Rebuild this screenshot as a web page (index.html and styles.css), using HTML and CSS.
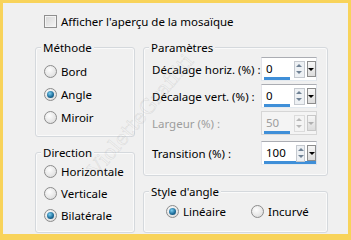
FILE: index.html
```html
<!DOCTYPE html>
<html lang="fr">
<head>
    <meta charset="UTF-8">
    <title>Mosaïque</title>
    <link rel="stylesheet" href="styles.css">
</head>
<body>
<div class="panel">
    <label class="check-row"><span class="check"></span>Afficher l'aperçu de la mosaïque</label>
    <div class="columns">
        <div class="col col-left">
            <div class="group methode">
                <div class="group-title">Méthode</div>
                <div class="radio-row first"><span class="radio"></span>Bord</div>
                <div class="radio-row"><span class="radio on"></span>Angle</div>
                <div class="radio-row"><span class="radio"></span>Miroir</div>
            </div>
            <div class="group direction">
                <div class="group-title">Direction</div>
                <div class="radio-row"><span class="radio"></span>Horizontale</div>
                <div class="radio-row"><span class="radio"></span>Verticale</div>
                <div class="radio-row"><span class="radio on"></span>Bilatérale</div>
            </div>
        </div>
        <div class="col col-right">
            <div class="group params">
                <div class="group-title">Paramètres</div>
                <div class="spin-row first">
                    <span class="spin-label">Décalage horiz. (%) :</span>
                    <div class="spin"><div class="value">0<span class="bar" style="width:26px"></span></div><span class="updown"><i class="up"></i><i class="down"></i></span><span class="drop"></span></div>
                </div>
                <div class="spin-row">
                    <span class="spin-label">Décalage vert. (%) :</span>
                    <div class="spin"><div class="value">0<span class="bar" style="width:26px"></span></div><span class="updown"><i class="up"></i><i class="down"></i></span><span class="drop"></span></div>
                </div>
                <div class="spin-row disabled">
                    <span class="spin-label">Largeur (%) :</span>
                    <div class="spin"><div class="value">50<span class="bar" style="width:26px"></span></div><span class="updown"><i class="up"></i><i class="down"></i></span><span class="drop"></span></div>
                </div>
                <div class="spin-row last">
                    <span class="spin-label">Transition (%) :</span>
                    <div class="spin"><div class="value">100<span class="bar" style="width:52px"></span></div><span class="updown"><i class="up"></i><i class="down"></i></span><span class="drop"></span></div>
                </div>
            </div>
            <div class="group style">
                <div class="group-title">Style d'angle</div>
                <div class="inline-radios">
                    <div class="radio-row"><span class="radio on"></span>Linéaire</div>
                    <div class="radio-row"><span class="radio"></span>Incurvé</div>
                </div>
            </div>
        </div>
    </div>
    <span class="watermark">VioletteGraffiti</span>
</div>
</body>
</html>
```

FILE: styles.css
```css
body { margin: 0; background: #f8d35a; font-family: 'Noto Sans', Arial, sans-serif; font-size: 11.5px; color: #000; }
.panel {
    position: relative; overflow: hidden;
    margin: 3px 3px 6px 3px; height: 231px;
    background: #f0f0f0;
    padding: 10px 0 0 32px; box-sizing: border-box;
}
.check-row { display: flex; align-items: center; height: 17px; margin-left: 9px; }
.check {
    width: 11px; height: 11px; margin-right: 4px;
    border: 1px solid #8f8f8f;
    background: linear-gradient(135deg, #d6d6d6, #f6f6f6);
    box-shadow: inset 0 0 0 1px #f4f4f4;
}
.columns { display: flex; gap: 8px; margin-top: 17px; }
.col { display: flex; flex-direction: column; gap: 15px; }
.col-left { width: 100px; }
.col-right { width: 185px; }
.group {
    border: 1px solid #d5d9dd; border-radius: 3px;
    box-shadow: inset 0 0 0 1px #fafafa;
    box-sizing: border-box;
}
.group-title {
    width: fit-content; line-height: 15px;
    margin: -8px 0 0 5px; padding: 0 2px;
    background: #f0f0f0;
}
.methode { height: 90px; }
.methode .radio-row { height: 23px; }
.methode .radio-row.first { margin-top: 5px; }
.direction { height: 81px; }
.params { height: 129px; }
.style { height: 42px; }
.radio-row { display: flex; align-items: center; height: 22px; padding-left: 8px; white-space: nowrap; }
.radio {
    width: 11px; height: 11px; margin-right: 4px; border-radius: 50%;
    border: 1px solid #8c8c8c;
    background: radial-gradient(circle at 40% 35%, #fdfdfd, #e2e2e2 70%, #cfcfcf);
    display: flex; align-items: center; justify-content: center;
}
.radio.on::after {
    content: ""; width: 7px; height: 7px; border-radius: 50%;
    background: radial-gradient(circle at 40% 35%, #7fd0f2, #1f6f9c 55%, #0d3c5c);
}
.inline-radios { display: flex; gap: 17px; padding-left: 14px; margin-top: 1px; }
.spin-row { display: flex; align-items: center; height: 24px; margin-top: 3px; padding: 0 10px 0 8px; white-space: nowrap; }
.spin-row.first { margin-top: 2px; }
.spin-row.last { margin-top: 6px; }
.spin-label { flex: 1; }
.spin {
    width: 56px; height: 24px; box-sizing: border-box;
    border: 1px solid #abadb3; border-color: #abadb3 #dbdfe6 #e3e9ef #e2e3ea;
    background: #fff;
    display: flex; align-items: center; padding-left: 3px;
}
.value { width: 28px; display: flex; flex-direction: column; line-height: 14px; padding-top: 3px; padding-left: 1px; }
.bar { height: 3px; background: #3f8fd8; margin: 1px 0 0 -2px; }
.updown {
    width: 9px; height: 15px; margin-left: 2px;
    border: 1px solid #c5c9cf; background: #eef1f4;
    display: flex; flex-direction: column; justify-content: space-around; align-items: center;
}
.updown i { width: 0; height: 0; border-left: 3px solid transparent; border-right: 3px solid transparent; }
.updown .up { border-bottom: 3px solid #6f8194; }
.updown .down { border-top: 3px solid #6f8194; }
.drop {
    width: 8px; height: 14px; margin-left: 2px;
    border: 1px solid #8d8d8d;
    background: linear-gradient(#f6f6f6, #dcdcdc);
    display: flex; align-items: center; justify-content: center;
}
.drop::after {
    content: ""; width: 0; height: 0;
    border-left: 3px solid transparent; border-right: 3px solid transparent; border-top: 3px solid #000;
}
.disabled .spin-label, .disabled .value { color: #9d9d9d; }
.disabled .spin { background: #f4f4f4; border-color: #d6d6d6; }
.disabled .updown { border-color: #dcdcdc; background: #f4f4f4; }
.disabled .updown .up { border-bottom-color: #b8b8b8; }
.disabled .updown .down { border-top-color: #b8b8b8; }
.disabled .drop { border-color: #c8c8c8; }
.disabled .drop::after { border-top-color: #b0b0b0; }
.watermark {
    position: absolute; left: 62px; top: 100px;
    transform: rotate(-50deg);
    font-size: 20px; font-family: 'DejaVu Serif', serif;
    color: transparent; -webkit-text-stroke: 0.5px rgba(120,120,120,0.2);
    pointer-events: none;
}
```
